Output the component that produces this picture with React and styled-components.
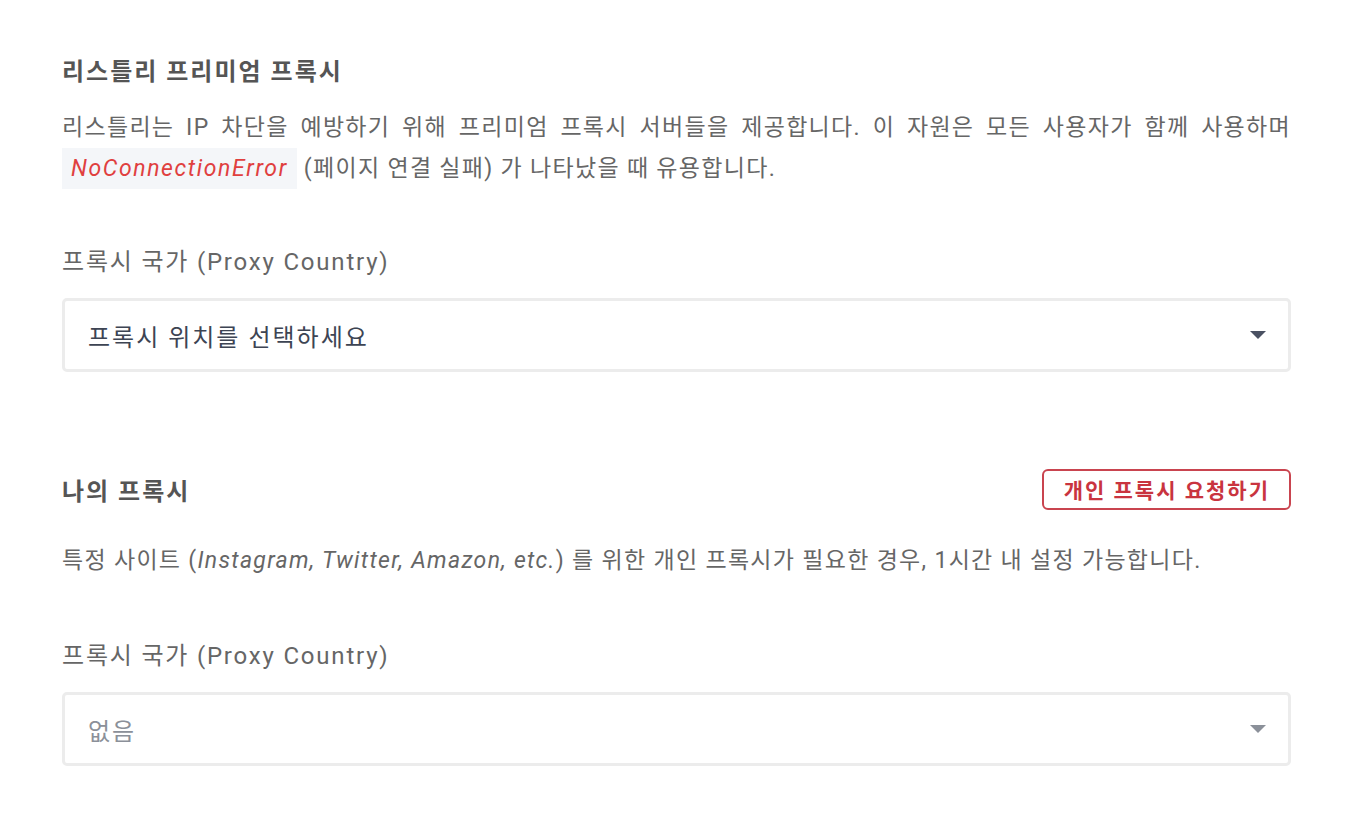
import styled, { createGlobalStyle } from "styled-components";

const GlobalStyle = createGlobalStyle`
  body {
    margin: 0;
    background: #ffffff;
    font-family: Roboto, "Noto Sans CJK KR", sans-serif;
    color: #666666;
  }
`;

const Page = styled.div`
  padding: 49px 59px 40px 62px;
`;

const Section = styled.section`
  margin-bottom: ${({ $gap }) => $gap || 0}px;
`;

const HeaderRow = styled.div`
  display: flex;
  justify-content: space-between;
  align-items: center;
  height: 40px;
`;

const Title = styled.h2`
  margin: 0;
  font-size: 24px;
  font-weight: 700;
  letter-spacing: 2px;
  color: #555555;
`;

const Description = styled.p`
  margin: ${({ $top }) => $top}px 0 0;
  font-size: 23px;
  line-height: 40px;
  letter-spacing: 1.3px;
  text-align: justify;
  color: #666666;
`;

const Code = styled.code`
  display: inline-block;
  padding: 0 9px;
  background: #f4f6f9;
  color: #e0403f;
  font-family: Roboto, sans-serif;
  font-style: italic;
  font-size: 23px;
  line-height: 41px;
  letter-spacing: 1.6px;
`;

const Italic = styled.em`
  font-style: italic;
`;

const Label = styled.div`
  margin-top: ${({ $top }) => $top}px;
  font-size: 24px;
  line-height: 30px;
  letter-spacing: 1.8px;
  color: #666666;
`;

const Select = styled.div`
  margin-top: 21px;
  display: flex;
  align-items: center;
  justify-content: space-between;
  height: 68px;
  padding: 0 22px 0 23px;
  border: 3px solid #ececec;
  border-radius: 5px;
  font-size: 24px;
  letter-spacing: 2px;
  color: ${({ $muted }) => ($muted ? "#8b9099" : "#3d4453")};
`;

const Caret = styled.span`
  width: 0;
  height: 0;
  border-left: 8px solid transparent;
  border-right: 8px solid transparent;
  border-top: 8px solid ${({ $muted }) => ($muted ? "#8b9099" : "#4a5162")};
`;

const RequestButton = styled.button`
  height: 41px;
  padding: 0 19px 0 20px;
  border: 2px solid #c9444f;
  border-radius: 6px;
  background: #ffffff;
  color: #c9343f;
  font-family: Roboto, "Noto Sans CJK KR", sans-serif;
  font-size: 21px;
  font-weight: 700;
  letter-spacing: 2px;
  cursor: pointer;
`;

const App = () => {
  return (
    <>
      <GlobalStyle />
      <Page>
        <Section $gap={97}>
          <HeaderRow>
            <Title>리스틀리 프리미엄 프록시</Title>
          </HeaderRow>
          <Description $top={19}>
            리스틀리는 IP 차단을 예방하기 위해 프리미엄 프록시 서버들을 제공합니다. 이 자원은 모든 사용자가 함께 사용하며{" "}
            <Code>NoConnectionError</Code> (페이지 연결 실패) 가 나타났을 때 유용합니다.
          </Description>
          <Label $top={58}>프록시 국가 (Proxy Country)</Label>
          <Select>
            프록시 위치를 선택하세요
            <Caret />
          </Select>
        </Section>
        <Section>
          <HeaderRow>
            <Title>나의 프록시</Title>
            <RequestButton type="button">개인 프록시 요청하기</RequestButton>
          </HeaderRow>
          <Description $top={32}>
            특정 사이트 (<Italic>Instagram, Twitter, Amazon, etc.</Italic>) 를 위한 개인 프록시가 필요한 경우, 1시간 내 설정 가능합니다.
          </Description>
          <Label $top={60}>프록시 국가 (Proxy Country)</Label>
          <Select $muted>
            없음
            <Caret $muted />
          </Select>
        </Section>
      </Page>
    </>
  );
};

export default App;
